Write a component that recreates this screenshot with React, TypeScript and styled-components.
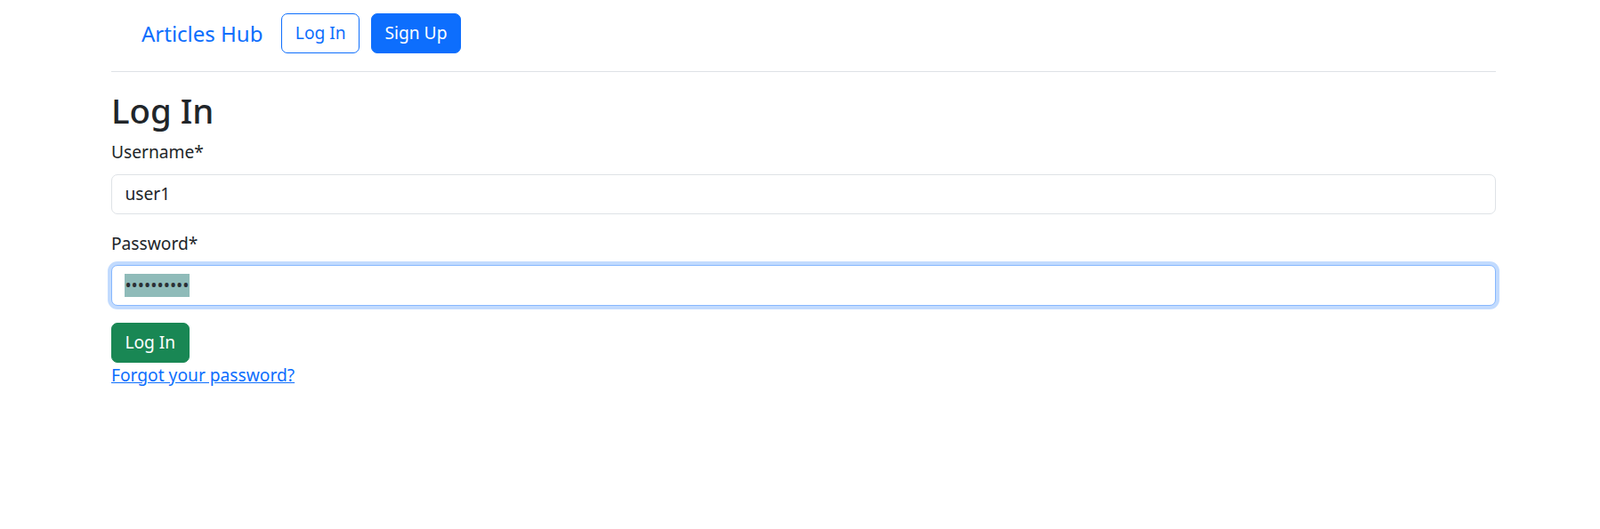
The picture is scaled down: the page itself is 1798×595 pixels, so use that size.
import React from "react";
import styled, { createGlobalStyle } from "styled-components";

const GlobalStyle = createGlobalStyle`
  html, body { margin: 0; padding: 0; background: #fff; }
  body {
    font-family: "Noto Sans", "Liberation Sans", sans-serif;
    color: #212529;
    font-size: 19.2px;
    line-height: 1.5;
  }
  *, *::before, *::after { box-sizing: border-box; }
`;

const Container = styled.div`
  margin-left: 125px;
  width: 1556px;
`;

const Navbar = styled.nav`
  display: flex;
  align-items: center;
  padding: 15px 0 0 34px;
`;

const Brand = styled.a`
  font-size: 24px;
  line-height: 36px;
  color: #0d6efd;
  text-decoration: none;
  margin-right: 21px;
`;

const NavButtons = styled.div`
  display: flex;
  gap: 13px;
`;

const Button = styled.button<{ $variant: "outline" | "primary" | "success" }>`
  font-family: inherit;
  font-size: 19.2px;
  line-height: 28.8px;
  padding: 7.2px 14.4px;
  border-radius: 7px;
  border: 1px solid
    ${(p) => (p.$variant === "success" ? "#198754" : "#0d6efd")};
  background: ${(p) =>
    p.$variant === "outline"
      ? "#fff"
      : p.$variant === "success"
      ? "#198754"
      : "#0d6efd"};
  color: ${(p) => (p.$variant === "outline" ? "#0d6efd" : "#fff")};
  cursor: pointer;
`;

const Divider = styled.hr`
  margin: 20px 0 0;
  border: 0;
  border-top: 1px solid #dee2e6;
`;

const Title = styled.h2`
  margin: 20px 0 10px;
  font-size: 38.4px;
  line-height: 46.08px;
  font-weight: 500;
  color: #212529;
`;

const Form = styled.form`
  display: flex;
  flex-direction: column;
  align-items: flex-start;
`;

const Field = styled.div`
  width: 100%;
  margin-bottom: 19.2px;
`;

const Label = styled.label`
  display: block;
  font-size: 19.2px;
  line-height: 28.8px;
  margin-bottom: 9.6px;
`;

const Input = styled.input`
  display: block;
  width: 100%;
  padding: 7.2px 14.4px;
  font-family: inherit;
  font-size: 19.2px;
  line-height: 28.8px;
  color: #212529;
  border: 1px solid #dee2e6;
  border-radius: 7px;
  background: #fff;
  outline: none;
`;

const FocusedInput = styled.div`
  display: flex;
  align-items: center;
  width: 100%;
  height: 45.2px;
  padding: 7.2px 14.4px;
  font-size: 19.2px;
  line-height: 28.8px;
  color: #212529;
  border: 1px solid #86b7fe;
  border-radius: 7px;
  box-shadow: 0 0 0 4px rgba(13, 110, 253, 0.25);
  background: #fff;
`;

const Selected = styled.span`
  background: #8fbbb9;
  color: #2b3035;
  line-height: 26.6px;
`;

const ForgotLink = styled.a`
  display: block;
  font-size: 19.2px;
  line-height: 28.8px;
  color: #0d6efd;
  text-decoration: underline;
`;

export default function App() {
  return (
    <>
      <GlobalStyle />
      <Container>
        <Navbar>
          <Brand href="#">Articles Hub</Brand>
          <NavButtons>
            <Button $variant="outline">Log In</Button>
            <Button $variant="primary">Sign Up</Button>
          </NavButtons>
        </Navbar>
        <Divider />
        <Title>Log In</Title>
        <Form onSubmit={(e) => e.preventDefault()}>
          <Field>
            <Label htmlFor="username">Username*</Label>
            <Input id="username" defaultValue="user1" />
          </Field>
          <Field>
            <Label>Password*</Label>
            <FocusedInput>
              <Selected>••••••••••</Selected>
            </FocusedInput>
          </Field>
          <Button $variant="success" type="submit">
            Log In
          </Button>
          <ForgotLink href="#">Forgot your password?</ForgotLink>
        </Form>
      </Container>
    </>
  );
}
